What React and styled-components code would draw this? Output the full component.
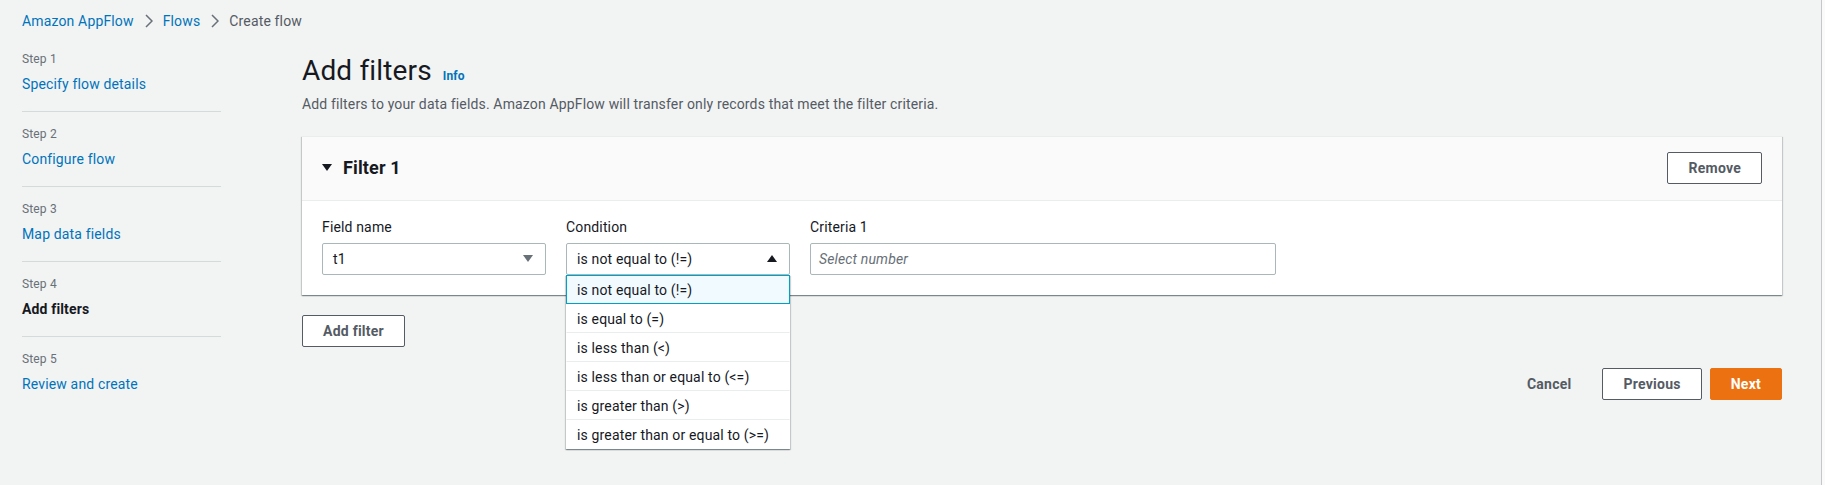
import React from 'react';
import styled, { createGlobalStyle } from 'styled-components';

const GlobalStyle = createGlobalStyle`
  html, body {
    margin: 0;
    padding: 0;
    background: #f2f3f3;
    font-family: Roboto, "Liberation Sans", Arial, sans-serif;
    letter-spacing: 0.15px;
    color: #16191f;
  }
  * { box-sizing: border-box; }
`;

const Page = styled.div`
  display: flex;
  min-height: 100vh;
`;

const Main = styled.main`
  flex: 1;
  padding: 11px 39px 0 22px;
`;

const ToolsEdge = styled.div`
  width: 4px;
  border-left: 1px solid #c6c6cd;
  background: #fafafa;
`;

const Crumbs = styled.nav`
  display: flex;
  align-items: center;
  font-size: 14px;
  line-height: 20px;
  height: 20px;
`;

const Crumb = styled.a`
  color: ${props => props.current ? '#545b64' : '#0073bb'};
  text-decoration: none;
`;

const Chevron = styled.span`
  display: inline-flex;
  margin: 0 10px 0 11px;
  color: #687078;
`;

const Layout = styled.div`
  display: flex;
  margin-top: 20px;
`;

const Sidebar = styled.ol`
  list-style: none;
  margin: 0 81px 0 0;
  padding: 0;
  width: 199px;
  flex-shrink: 0;
`;

const Step = styled.li`
  padding: 0 0 17px;
  margin-bottom: 14px;
  border-bottom: ${props => props.last ? 'none' : '1px solid #d5dbdb'};
`;

const StepLabel = styled.div`
  font-size: 12px;
  line-height: 16px;
  color: #687078;
  margin-bottom: 7px;
`;

const StepLink = styled.a`
  display: block;
  font-size: 14px;
  line-height: 20px;
  color: ${props => props.active ? '#16191f' : '#0073bb'};
  font-weight: ${props => props.active ? 700 : 400};
  text-decoration: none;
`;

const Content = styled.section`
  flex: 1;
  padding-top: 2px;
`;

const TitleRow = styled.div`
  display: flex;
  align-items: baseline;
`;

const Title = styled.h1`
  margin: 0;
  font-size: 28px;
  line-height: 36px;
  font-weight: 400;
  color: #16191f;
`;

const InfoLink = styled.a`
  margin-left: 11px;
  font-size: 12px;
  font-weight: 700;
  color: #0073bb;
  text-decoration: none;
`;

const Description = styled.p`
  margin: 5px 0 22px;
  font-size: 14px;
  line-height: 20px;
  color: #545b64;
`;

const Card = styled.div`
  background: #fff;
  box-shadow: 0 1px 1px 0 rgba(0, 28, 36, 0.3), 1px 1px 1px 0 rgba(0, 28, 36, 0.15), -1px 1px 1px 0 rgba(0, 28, 36, 0.15);
  border-top: 1px solid #eaeded;
`;

const CardHeader = styled.div`
  display: flex;
  align-items: center;
  justify-content: space-between;
  padding: 15px 20px 16px;
  background: #fafafa;
  border-bottom: 1px solid #eaeded;
`;

const CardTitle = styled.h2`
  display: flex;
  align-items: center;
  margin: 0;
  font-size: 18px;
  line-height: 22px;
  font-weight: 700;
  color: #16191f;
`;

const Toggle = styled.span`
  display: inline-flex;
  margin-right: 11px;
`;

const CardBody = styled.div`
  display: flex;
  gap: 20px;
  padding: 16px 20px 20px;
`;

const Field = styled.div`
  display: flex;
  flex-direction: column;
  width: ${props => props.width}px;
  position: relative;
`;

const Label = styled.label`
  font-size: 14px;
  line-height: 20px;
  color: #16191f;
  margin-bottom: 6px;
`;

const SelectBox = styled.div`
  display: flex;
  align-items: center;
  justify-content: space-between;
  height: 32px;
  padding: 0 12px 0 10px;
  border: 1px solid #aab7b8;
  border-radius: 2px;
  background: #fff;
  font-size: 14px;
  color: #16191f;
`;

const Placeholder = styled.span`
  font-style: italic;
  color: #687078;
`;

const InputBox = styled.div`
  display: flex;
  align-items: center;
  height: 32px;
  padding: 0 8px;
  border: 1px solid #aab7b8;
  border-radius: 2px;
  background: #fff;
  font-size: 14px;
`;

const Menu = styled.ul`
  position: absolute;
  top: 58px;
  left: 0;
  right: 0;
  margin: 0;
  padding: 0;
  list-style: none;
  background: #fff;
  box-shadow: 0 1px 1px 0 rgba(0, 28, 36, 0.3), 1px 1px 1px 0 rgba(0, 28, 36, 0.15), -1px 1px 1px 0 rgba(0, 28, 36, 0.15);
  z-index: 5;
`;

const Option = styled.li`
  height: 29px;
  display: flex;
  align-items: center;
  padding: 0 10px;
  font-size: 14px;
  color: #16191f;
  background: ${props => props.selected ? '#f1faff' : '#fff'};
  border: 1px solid ${props => props.selected ? '#00a1c9' : 'transparent'};
  border-bottom-color: ${props => props.selected ? '#00a1c9' : '#eaeded'};
  &:last-child { border-bottom-color: transparent; }
`;

const Button = styled.button`
  height: 32px;
  padding: 0 20px;
  margin-right: ${props => props.link ? 2 : 0}px;
  border: 1px solid ${props => props.primary ? '#ec7211' : props.link ? 'transparent' : '#545b64'};
  border-radius: 2px;
  background: ${props => props.primary ? '#ec7211' : props.link ? 'transparent' : '#fff'};
  color: ${props => props.primary ? '#fff' : '#545b64'};
  font-family: inherit;
  letter-spacing: 0.25px;
  font-size: 14px;
  font-weight: 700;
  cursor: pointer;
`;

const AddRow = styled.div`
  margin-top: 20px;
`;

const Footer = styled.div`
  display: flex;
  justify-content: flex-end;
  gap: 8px;
  margin-top: 21px;
`;

const Caret = ({ up, color }) => (
  <svg width="10" height="8" viewBox="0 0 10 8">
    <path d={up ? 'M0 7 L5 0 L10 7 Z' : 'M0 0 L10 0 L5 7 Z'} fill={color} />
  </svg>
);

const ChevronIcon = () => (
  <svg width="8" height="14" viewBox="0 0 8 14">
    <path d="M1 1 L7 7 L1 13" fill="none" stroke="currentColor" strokeWidth="1.5" />
  </svg>
);

const steps = [
  { label: 'Step 1', name: 'Specify flow details' },
  { label: 'Step 2', name: 'Configure flow' },
  { label: 'Step 3', name: 'Map data fields' },
  { label: 'Step 4', name: 'Add filters', active: true },
  { label: 'Step 5', name: 'Review and create' },
];

const conditions = [
  'is not equal to (!=)',
  'is equal to (=)',
  'is less than (<)',
  'is less than or equal to (<=)',
  'is greater than (>)',
  'is greater than or equal to (>=)',
];

export default function App() {
  return (
    <Page>
      <GlobalStyle />
      <Main>
        <Crumbs>
          <Crumb href="#">Amazon AppFlow</Crumb>
          <Chevron><ChevronIcon /></Chevron>
          <Crumb href="#">Flows</Crumb>
          <Chevron><ChevronIcon /></Chevron>
          <Crumb current>Create flow</Crumb>
        </Crumbs>

        <Layout>
          <Sidebar>
            {steps.map((s, i) => (
              <Step key={s.label} last={i === steps.length - 1}>
                <StepLabel>{s.label}</StepLabel>
                <StepLink href="#" active={s.active}>{s.name}</StepLink>
              </Step>
            ))}
          </Sidebar>

          <Content>
            <TitleRow>
              <Title>Add filters</Title>
              <InfoLink href="#">Info</InfoLink>
            </TitleRow>
            <Description>
              Add filters to your data fields. Amazon AppFlow will transfer only records that meet the filter criteria.
            </Description>

            <Card>
              <CardHeader>
                <CardTitle>
                  <Toggle><Caret color="#16191f" /></Toggle>
                  Filter 1
                </CardTitle>
                <Button>Remove</Button>
              </CardHeader>
              <CardBody>
                <Field width={224}>
                  <Label>Field name</Label>
                  <SelectBox>
                    <span>t1</span>
                    <Caret color="#687078" />
                  </SelectBox>
                </Field>
                <Field width={224}>
                  <Label>Condition</Label>
                  <SelectBox>
                    <span>is not equal to (!=)</span>
                    <Caret up color="#16191f" />
                  </SelectBox>
                  <Menu>
                    {conditions.map((c, i) => (
                      <Option key={c} selected={i === 0}>{c}</Option>
                    ))}
                  </Menu>
                </Field>
                <Field width={466}>
                  <Label>Criteria 1</Label>
                  <InputBox>
                    <Placeholder>Select number</Placeholder>
                  </InputBox>
                </Field>
              </CardBody>
            </Card>

            <AddRow>
              <Button>Add filter</Button>
            </AddRow>

            <Footer>
              <Button link>Cancel</Button>
              <Button>Previous</Button>
              <Button primary>Next</Button>
            </Footer>
          </Content>
        </Layout>
      </Main>
      <ToolsEdge />
    </Page>
  );
}
